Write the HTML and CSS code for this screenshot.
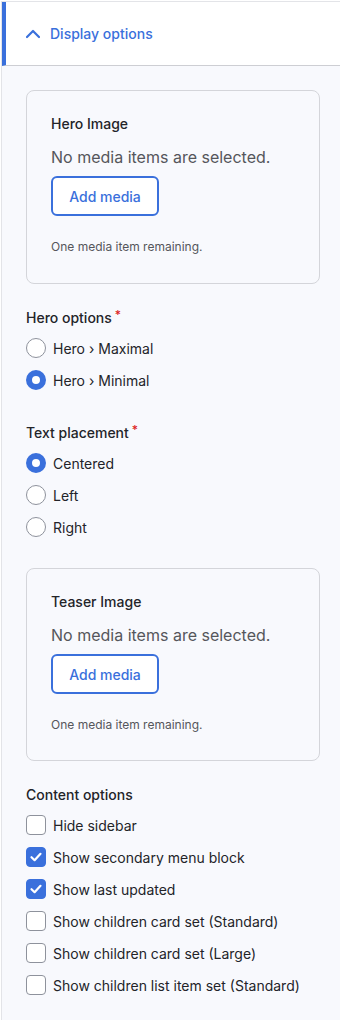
FILE: index.html
```html
<!DOCTYPE html>
<html lang="en">
<head>
  <meta charset="UTF-8" />
  <meta name="viewport" content="width=device-width, initial-scale=1.0"/>
  <title>Display options</title>
  <link rel="stylesheet" href="styles.css">
</head>
<body>

  <div class="details">
    <!-- Header -->
    <div class="summary">
      <svg class="chevron" width="14" height="10" viewBox="0 0 14 10">
        <polyline points="1,8 7,2 13,8" fill="none" stroke="#3a70dc" stroke-width="2.2" stroke-linecap="round" stroke-linejoin="round"/>
      </svg>
      <span>Display options</span>
    </div>

    <div class="body">
      <!-- Hero image -->
      <div class="media-card">
        <div class="card-title">Hero Image</div>
        <div class="empty">No media items are selected.</div>
        <button class="add-btn">Add media</button>
        <div class="remaining">One media item remaining.</div>
      </div>

      <div class="group first">
        <div class="label">Hero options<span class="req">*</span></div>
        <label class="option"><span class="radio"></span>Hero › Maximal</label>
        <label class="option"><span class="radio checked"></span>Hero › Minimal</label>
      </div>

      <div class="group">
        <div class="label">Text placement<span class="req">*</span></div>
        <label class="option"><span class="radio checked"></span>Centered</label>
        <label class="option"><span class="radio"></span>Left</label>
        <label class="option"><span class="radio"></span>Right</label>
      </div>

      <!-- Teaser image -->
      <div class="media-card teaser">
        <div class="card-title">Teaser Image</div>
        <div class="empty">No media items are selected.</div>
        <button class="add-btn">Add media</button>
        <div class="remaining">One media item remaining.</div>
      </div>

      <div class="group content">
        <div class="label">Content options</div>
        <label class="option"><span class="check"></span>Hide sidebar</label>
        <label class="option"><span class="check checked"><svg width="14" height="14" viewBox="0 0 14 14"><polyline points="2.5,7.2 5.6,10.2 11.5,3.8" fill="none" stroke="#fff" stroke-width="2.2" stroke-linecap="round" stroke-linejoin="round"/></svg></span>Show secondary menu block</label>
        <label class="option"><span class="check checked"><svg width="14" height="14" viewBox="0 0 14 14"><polyline points="2.5,7.2 5.6,10.2 11.5,3.8" fill="none" stroke="#fff" stroke-width="2.2" stroke-linecap="round" stroke-linejoin="round"/></svg></span>Show last updated</label>
        <label class="option"><span class="check"></span>Show children card set (Standard)</label>
        <label class="option"><span class="check"></span>Show children card set (Large)</label>
        <label class="option"><span class="check"></span>Show children list item set (Standard)</label>
      </div>
    </div>
  </div>

</body>
</html>
```

FILE: styles.css
```css
* { box-sizing: border-box; margin: 0; padding: 0; }
body {
  font-family: Inter, 'Noto Sans', sans-serif;
  background: #fff;
  color: #232429;
  overflow: hidden;
}
.details {
  margin: 1px 0 0 1px;
  border-top: 1px solid #e3e4e8;
  border-left: 1px solid #e3e4e8;
  background: #f8f9fd;
  min-height: 1019px;
}
.summary {
  display: flex;
  align-items: center;
  height: 64px;
  background: #fff;
  border-left: 4px solid #3a70dc;
  border-bottom: 1px solid #cdced3;
  padding-left: 20px;
  color: #3a70dc;
  font-size: 14px;
  font-weight: 500;
}
.chevron { margin-right: 10px; margin-top: 1px; }
.body { padding: 24px 20px 24px 24px; }
.media-card {
  border: 1px solid #d4d5da;
  border-radius: 8px;
  padding: 24px 24px 27px;
  height: 194px;
}
.media-card.teaser { margin-top: 25px; height: 193px; }
.card-title { font-size: 14px; font-weight: 500; line-height: 18px; }
.empty {
  margin-top: 12px;
  font-size: 16px;
  line-height: 24px;
  color: #55565b;
}
.add-btn {
  margin-top: 7px;
  height: 40px;
  width: 108px;
  border: 2px solid #3a70dc;
  border-radius: 6px;
  background: #fff;
  color: #3a70dc;
  font-family: inherit;
  font-size: 14px;
  font-weight: 500;
}
.remaining {
  margin-top: 22px;
  font-size: 12px;
  line-height: 18px;
  color: #55565b;
}
.group { margin-top: 24px; }
.group.first { margin-top: 21px; }
.group.content { margin-top: 24px; }
.label {
  font-size: 14px;
  font-weight: 500;
  line-height: 20px;
  margin-bottom: 4px;
}
.req {
  color: #dc2323;
  font-size: 12px;
  margin-left: 3px;
  vertical-align: 4px;
}
.option {
  display: flex;
  align-items: center;
  height: 32px;
  font-size: 14px;
  color: #232429;
}
.radio, .check {
  flex: none;
  width: 20px;
  height: 20px;
  margin-right: 7px;
  border: 1px solid #8e929c;
  background: #fff;
}
.radio { border-radius: 50%; }
.radio.checked { border: 6px solid #3a70dc; }
.check {
  border-radius: 4px;
  display: flex;
  align-items: center;
  justify-content: center;
}
.check.checked { background: #3a70dc; border-color: #3a70dc; }
```
